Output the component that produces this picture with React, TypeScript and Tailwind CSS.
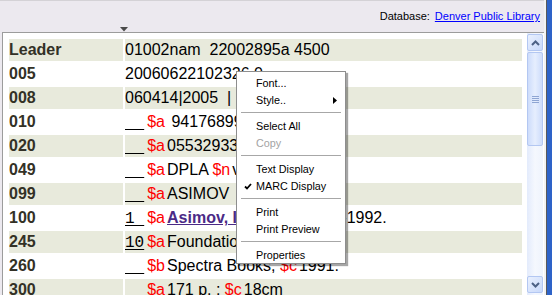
import React from 'react';

type Seg = { t: 'ind' | 'sf' | 'txt' | 'link'; v: string };

const rows: { tag: string; segs: Seg[] }[] = [
  { tag: 'Leader', segs: [{ t: 'txt', v: '01002nam  22002895a 4500' }] },
  { tag: '005', segs: [{ t: 'txt', v: '20060622102326.0' }] },
  { tag: '008', segs: [{ t: 'txt', v: '060414|2005  |' }] },
  { tag: '010', segs: [{ t: 'ind', v: '  ' }, { t: 'sf', v: 'a' }, { t: 'txt', v: ' 94176899' }] },
  { tag: '020', segs: [{ t: 'ind', v: '  ' }, { t: 'sf', v: 'a' }, { t: 'txt', v: '0553293354' }] },
  { tag: '049', segs: [{ t: 'ind', v: '  ' }, { t: 'sf', v: 'a' }, { t: 'txt', v: 'DPLA ' }, { t: 'sf', v: 'n' }, { t: 'txt', v: 'v.1' }] },
  { tag: '099', segs: [{ t: 'ind', v: '  ' }, { t: 'sf', v: 'a' }, { t: 'txt', v: 'ASIMOV' }] },
  { tag: '100', segs: [{ t: 'ind', v: '1 ' }, { t: 'sf', v: 'a' }, { t: 'link', v: 'Asimov, Isaac,' }, { t: 'txt', v: ' ' }, { t: 'sf', v: 'd' }, { t: 'txt', v: ' 1920-1992.' }] },
  { tag: '245', segs: [{ t: 'ind', v: '10' }, { t: 'sf', v: 'a' }, { t: 'txt', v: 'Foundation' }] },
  { tag: '260', segs: [{ t: 'ind', v: '  ' }, { t: 'sf', v: 'b' }, { t: 'txt', v: 'Spectra Books, ' }, { t: 'sf', v: 'c' }, { t: 'txt', v: '1991.' }] },
  { tag: '300', segs: [{ t: 'ind', v: '  ' }, { t: 'sf', v: 'a' }, { t: 'txt', v: '171 p. ; ' }, { t: 'sf', v: 'c' }, { t: 'txt', v: '18cm' }] },
];

function Segment({ s, prev }: { s: Seg; prev?: Seg }) {
  const gap = prev && prev.t === 'sf' ? 'ml-[2px]' : '';
  if (s.t === 'ind')
    return (
      <span className="font-['Liberation_Mono',monospace] underline underline-offset-[2px] mr-[3px]">{s.v}</span>
    );
  if (s.t === 'sf') return <span className="text-[#ff0000]">${s.v}</span>;
  if (s.t === 'link')
    return <span className={`font-bold text-[#4b2a86] underline ${gap}`}>{s.v}</span>;
  return <span className={gap}>{s.v}</span>;
}

const menuItems: (string | null)[] = [
  'Font...',
  'Style..',
  null,
  'Select All',
  'Copy',
  null,
  'Text Display',
  'MARC Display',
  null,
  'Print',
  'Print Preview',
  null,
  'Properties',
];

function ContextMenu() {
  return (
    <div className="absolute left-[236px] top-[71px] w-[110px] bg-white border border-[#8e8e8e] pt-[2px] shadow-[2px_2px_1px_rgba(0,0,0,0.35)] text-[10.8px] text-black">
      {menuItems.map((m, i) =>
        m === null ? (
          <div key={i} className="h-[9px] flex items-center px-[4px]">
            <div className="h-px w-full bg-[#a7a7a7]" />
          </div>
        ) : (
          <div key={i} className={`relative h-[17px] flex items-center pl-[19px] pt-[1px] ${m === 'Copy' ? 'text-[#a3a3a3]' : ''}`}>
            {m === 'MARC Display' && (
              <svg className="absolute left-[7px] top-[6px]" width="8" height="7" viewBox="0 0 8 7">
                <path d="M1 3.5 L3 5.5 L7 1" stroke="#000" strokeWidth="1.8" fill="none" />
              </svg>
            )}
            {m}
            {m === 'Style..' && (
              <svg className="absolute right-[8px] top-[6px]" width="4" height="7" viewBox="0 0 4 7">
                <polygon points="0,0 4,3.5 0,7" fill="#000" />
              </svg>
            )}
          </div>
        )
      )}
    </div>
  );
}

function Scrollbar() {
  return (
    <div className="w-[16px] flex flex-col pt-[1px] pb-[2px] bg-gradient-to-r from-[#e3ebfc] via-[#f5f8fe] to-[#eef3fd]">
      <div className="h-[17px] rounded-[2px] border border-[#b3c7f2] bg-gradient-to-br from-[#e9f0fe] to-[#c9d9fa] flex items-center justify-center">
        <svg width="9" height="6" viewBox="0 0 9 6">
          <path d="M1 5 L4.5 1.5 L8 5" stroke="#4d6185" strokeWidth="2" fill="none" />
        </svg>
      </div>
      <div className="mt-[1px] h-[94px] rounded-[2px] border border-[#b3c7f2] bg-gradient-to-r from-[#cddcfb] via-[#e6eefe] to-[#cddcfb] flex flex-col items-center justify-center gap-[1px]">
        <div className="w-[7px] h-px bg-[#8ea5d3]" />
        <div className="w-[7px] h-px bg-[#8ea5d3]" />
        <div className="w-[7px] h-px bg-[#8ea5d3]" />
        <div className="w-[7px] h-px bg-[#8ea5d3]" />
      </div>
      <div className="flex-1" />
      <div className="h-[17px] rounded-[2px] border border-[#b3c7f2] bg-gradient-to-br from-[#e9f0fe] to-[#c9d9fa] flex items-center justify-center">
        <svg width="9" height="6" viewBox="0 0 9 6">
          <path d="M1 1 L4.5 4.5 L8 1" stroke="#4d6185" strokeWidth="2" fill="none" />
        </svg>
      </div>
    </div>
  );
}

export default function App() {
  return (
    <div className="relative w-[552px] h-[295px] overflow-hidden bg-[#ece9ef] font-['Liberation_Sans',Arial,sans-serif]">
      <div className="flex h-full">
        <div className="flex flex-col w-[544px] border-t border-[#d4d2d6]">
          {/* header */}
          <div className="relative h-[31px] flex items-center justify-end pr-[4px] text-[11px] text-black">
            <span>Database:</span>
            <span className="ml-[5px] text-[#0000ff] underline">Denver Public Library</span>
            <svg className="absolute left-[120px] top-[26px]" width="8" height="5" viewBox="0 0 8 5">
              <polygon points="0,0 8,0 4,4.5" fill="#4a4a4a" />
            </svg>
          </div>
          {/* record panel */}
          <div className="flex-1 min-h-0 flex ml-[2px] border-t border-l border-[#9c9c9c] bg-white overflow-hidden pr-[1px]">
            <div className="flex-1 flex flex-col gap-[2px] pl-[6px] pr-[5px] pt-[6px] text-[16px] leading-[22px] text-black">
              {rows.map((r, idx) => {
                const bg = idx % 2 === 0 ? 'bg-[#e8eadc]' : 'bg-white';
                return (
                  <div key={r.tag} className="flex gap-[2px] shrink-0">
                    <div className={`w-[114px] h-[22px] ${bg} font-bold text-[#333126]`}>{r.tag}</div>
                    <div className={`flex-1 h-[22px] ${bg} whitespace-pre`}>
                      {r.segs.map((s, i) => (
                        <Segment key={i} s={s} prev={r.segs[i - 1]} />
                      ))}
                    </div>
                  </div>
                );
              })}
            </div>
            <Scrollbar />
          </div>
        </div>
        <div className="w-[8px] flex">
          <div className="w-[2px] bg-[#f3f3f3]" />
          <div className="w-px bg-[#5a5a5a]" />
          <div className="flex-1 bg-[#2e63c8]" />
        </div>
      </div>
      <ContextMenu />
    </div>
  );
}
